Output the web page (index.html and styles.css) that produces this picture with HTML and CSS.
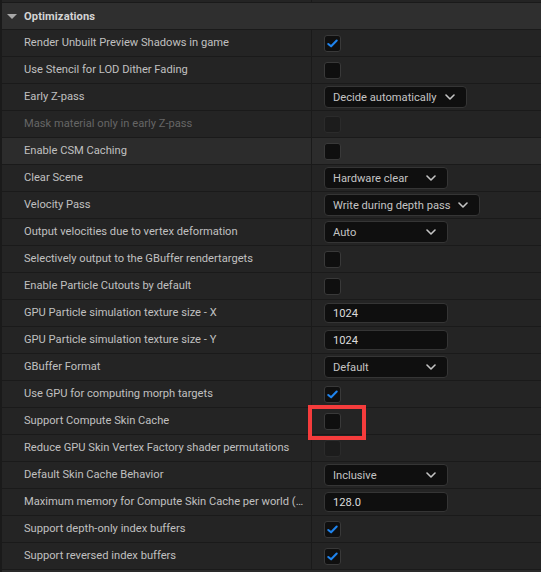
FILE: index.html
```html
<!DOCTYPE html>
<html>
<head>
<meta charset="utf-8">
<link rel="stylesheet" href="styles.css">
</head>
<body>
<div class="panel">
  <div class="top-strip"><div class="lc"></div><div class="vc"></div></div>
  <div class="header">
    <span class="caret"></span>
    <span class="htitle">Optimizations</span>
  </div>

  <div class="row"><div class="label">Render Unbuilt Preview Shadows in game</div><div class="value"><span class="cb on"><svg viewBox="0 0 16 16"><path d="M3.5 8.5 L6.5 11 L12.5 4.8"/></svg></span></div></div>
  <div class="row"><div class="label">Use Stencil for LOD Dither Fading</div><div class="value"><span class="cb"></span></div></div>
  <div class="row"><div class="label">Early Z-pass</div><div class="value"><span class="combo auto-w">Decide automatically<svg class="chev" viewBox="0 0 10 6"><path d="M1 1 L5 5 L9 1"/></svg></span></div></div>
  <div class="row"><div class="label dim">Mask material only in early Z-pass</div><div class="value"><span class="cb disabled"></span></div></div>
  <div class="row hover"><div class="label">Enable CSM Caching</div><div class="value"><span class="cb"></span></div></div>
  <div class="row"><div class="label">Clear Scene</div><div class="value"><span class="combo">Hardware clear<svg class="chev" viewBox="0 0 10 6"><path d="M1 1 L5 5 L9 1"/></svg></span></div></div>
  <div class="row"><div class="label">Velocity Pass</div><div class="value"><span class="combo auto-w">Write during depth pass<svg class="chev" viewBox="0 0 10 6"><path d="M1 1 L5 5 L9 1"/></svg></span></div></div>
  <div class="row"><div class="label">Output velocities due to vertex deformation</div><div class="value"><span class="combo">Auto<svg class="chev" viewBox="0 0 10 6"><path d="M1 1 L5 5 L9 1"/></svg></span></div></div>
  <div class="row"><div class="label">Selectively output to the GBuffer rendertargets</div><div class="value"><span class="cb"></span></div></div>
  <div class="row"><div class="label">Enable Particle Cutouts by default</div><div class="value"><span class="cb"></span></div></div>
  <div class="row"><div class="label">GPU Particle simulation texture size - X</div><div class="value"><span class="num">1024</span></div></div>
  <div class="row"><div class="label">GPU Particle simulation texture size - Y</div><div class="value"><span class="num">1024</span></div></div>
  <div class="row"><div class="label">GBuffer Format</div><div class="value"><span class="combo">Default<svg class="chev" viewBox="0 0 10 6"><path d="M1 1 L5 5 L9 1"/></svg></span></div></div>
  <div class="row"><div class="label">Use GPU for computing morph targets</div><div class="value"><span class="cb on"><svg viewBox="0 0 16 16"><path d="M3.5 8.5 L6.5 11 L12.5 4.8"/></svg></span></div></div>
  <div class="row"><div class="label">Support Compute Skin Cache</div><div class="value"><span class="cb"></span></div></div>
  <div class="row"><div class="label">Reduce GPU Skin Vertex Factory shader permutations</div><div class="value"><span class="cb disabled"></span></div></div>
  <div class="row"><div class="label">Default Skin Cache Behavior</div><div class="value"><span class="combo">Inclusive<svg class="chev" viewBox="0 0 10 6"><path d="M1 1 L5 5 L9 1"/></svg></span></div></div>
  <div class="row"><div class="label">Maximum memory for Compute Skin Cache per world (MB)</div><div class="value"><span class="num">128.0</span></div></div>
  <div class="row"><div class="label">Support depth-only index buffers</div><div class="value"><span class="cb on"><svg viewBox="0 0 16 16"><path d="M3.5 8.5 L6.5 11 L12.5 4.8"/></svg></span></div></div>
  <div class="row"><div class="label">Support reversed index buffers</div><div class="value"><span class="cb on"><svg viewBox="0 0 16 16"><path d="M3.5 8.5 L6.5 11 L12.5 4.8"/></svg></span></div></div>
  <div class="bottom-strip"></div>

  <div class="highlight"></div>
</div>
</body>
</html>
```

FILE: styles.css
```css
* { box-sizing: border-box; }
html, body {
  margin: 0;
  padding: 0;
  background: #1a1a1a;
  width: 541px;
  height: 572px;
  overflow: hidden;
}
.panel {
  position: relative;
  margin-left: 2px;
  font-family: Roboto, "Liberation Sans", sans-serif;
  font-size: 11.15px;
  color: #c0c0c0;
}
.top-strip {
  height: 3px;
  display: grid;
  grid-template-columns: 309px 1fr;
  background: #1a1a1a;
}
.top-strip .lc, .top-strip .vc { background: #242424; height: 2px; }
.top-strip .vc { margin-left: 1px; }
.header {
  height: 26px;
  background: #2f2f2f;
  display: flex;
  align-items: center;
  padding-left: 5px;
}
.caret {
  width: 0;
  height: 0;
  border-left: 5px solid transparent;
  border-right: 5px solid transparent;
  border-top: 5px solid #a8a8a8;
  margin-right: 7px;
  margin-top: 1px;
}
.htitle {
  font-weight: bold;
  color: #d4d4d4;
  letter-spacing: 0.1px;
}
.row {
  height: 27px;
  border-top: 1px solid #1a1a1a;
  display: grid;
  grid-template-columns: 309px 1fr;
  background: #1a1a1a;
}
.label {
  background: #242424;
  padding-left: 22px;
  padding-right: 6px;
  white-space: nowrap;
  overflow: hidden;
  text-overflow: ellipsis;
  display: block;
  line-height: 26px;
}
.label.dim { color: #666666; }
.value {
  background: #242424;
  margin-left: 1px;
  display: flex;
  align-items: center;
  padding-left: 12px;
}
.row.hover .label, .row.hover .value { background: #2c2c2c; }
.cb {
  width: 17px;
  height: 17px;
  border: 1px solid #393939;
  border-radius: 3px;
  background: #0f0f0f;
  display: flex;
  align-items: center;
  justify-content: center;
}
.cb svg { width: 15px; height: 15px; }
.cb svg path {
  fill: none;
  stroke: #1f84ee;
  stroke-width: 2.2;
  stroke-linecap: round;
  stroke-linejoin: round;
}
.cb.disabled {
  background: #1c1c1c;
  border-color: #2b2b2b;
}
.combo {
  height: 22px;
  width: 124px;
  border: 1px solid #353535;
  border-radius: 4px;
  background: #0f0f0f;
  display: flex;
  align-items: center;
  padding-left: 8px;
  padding-right: 11px;
  color: #c4c4c4;
  white-space: nowrap;
}
.combo.auto-w { width: auto; }
.combo .chev {
  width: 10px;
  height: 6px;
  margin-left: auto;
  flex: none;
}
.combo.auto-w .chev { margin-left: 8px; }
.chev path {
  fill: none;
  stroke: #c4c4c4;
  stroke-width: 1.6;
  stroke-linecap: round;
  stroke-linejoin: round;
}
.num {
  height: 20px;
  width: 124px;
  border: 1px solid #353535;
  border-radius: 4px;
  background: #0f0f0f;
  display: flex;
  align-items: center;
  padding-left: 8px;
  color: #dcdcdc;
}
.bottom-strip {
  height: 4px;
  border-top: 1px solid #1a1a1a;
  background: #2a2a2a;
}
.highlight {
  position: absolute;
  left: 306px;
  top: 405px;
  width: 58px;
  height: 35px;
  border: 4px solid #f53c3c;
}
```
